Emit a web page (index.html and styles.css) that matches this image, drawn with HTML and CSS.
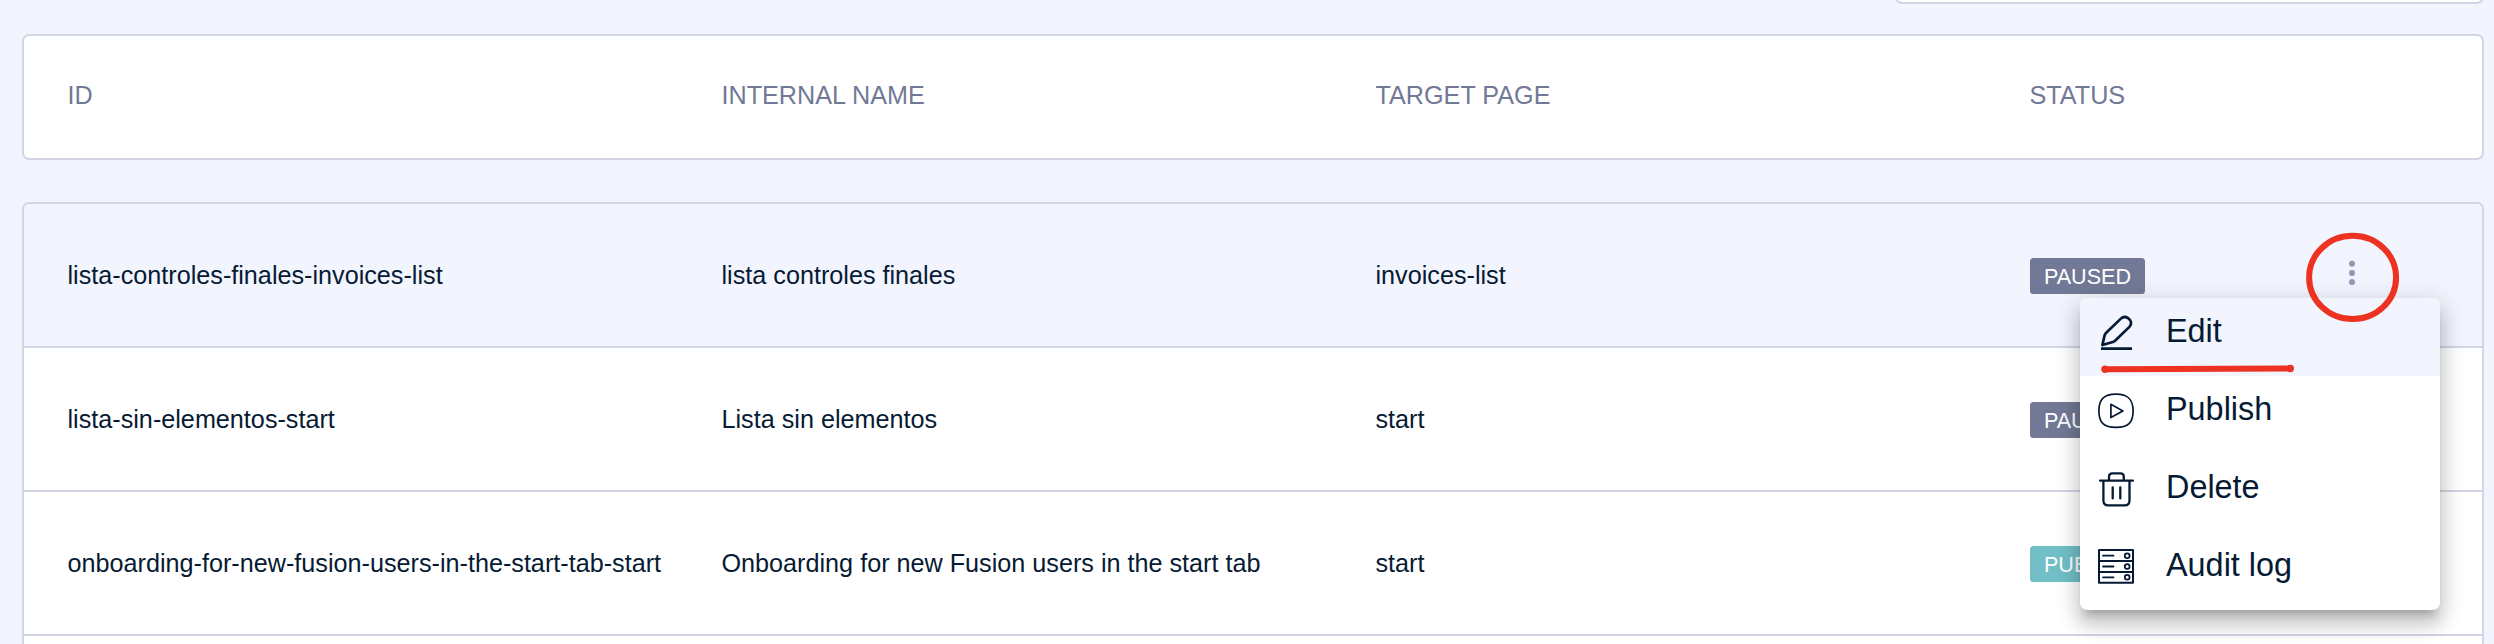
FILE: index.html
```html
<!DOCTYPE html>
<html lang="en">
<head>
<meta charset="utf-8">
<title>Guides</title>
<link rel="stylesheet" href="styles.css">
</head>
<body>
<main class="page">
  <div class="search-box"></div>
  <section class="table-head columns">
    <span>ID</span><span>INTERNAL NAME</span><span>TARGET PAGE</span><span>STATUS</span>
  </section>
  <section class="table-body">
    <div class="row columns row-active">
      <span>lista-controles-finales-invoices-list</span><span>lista controles finales</span><span>invoices-list</span>
      <div class="status"><span class="badge">PAUSED</span>
        <svg class="more" width="8" height="28" viewBox="0 0 8 28"><circle cx="4" cy="4.7" r="3"/><circle cx="4" cy="13.9" r="3"/><circle cx="4" cy="23" r="3"/></svg>
      </div>
    </div>
    <div class="row columns">
      <span>lista-sin-elementos-start</span><span>Lista sin elementos</span><span>start</span>
      <div class="status"><span class="badge">PAUSED</span></div>
    </div>
    <div class="row columns">
      <span>onboarding-for-new-fusion-users-in-the-start-tab-start</span><span>Onboarding for new Fusion users in the start tab</span><span>start</span>
      <div class="status"><span class="badge badge-published">PUBLISHED</span></div>
    </div>
    <div class="row columns"></div>
  </section>

  <nav class="menu">
    <a class="menu-item menu-item-active">
      <svg class="icon" viewBox="0 0 36 36"><path d="M4.4 31 6.6 21.4Q7 19.9 8.2 18.8L22.6 4.9Q26.2 1.5 30 4.2Q35.4 8 31.4 12.9L17.6 26.2Q16.4 27.4 14.8 28Z" stroke-width="2.7"/><path d="M3 34.6H34" stroke-width="2.8" stroke-linecap="butt"/></svg>
      <span>Edit</span>
    </a>
    <a class="menu-item">
      <svg class="icon" viewBox="0 -1 36 36"><path d="M18 1.1C30 1.1 35.1 6.2 35.1 18S30 34.4 18 34.4.9 29.8.9 18 6 1.1 18 1.1Z" stroke-width="1.7"/><path d="M12.9 11.3V24.6L24.9 18Z" stroke-width="1.7"/></svg>
      <span>Publish</span>
    </a>
    <a class="menu-item">
      <svg class="icon" viewBox="0 -1 36 36"><path d="M2 9.6H35M5.4 9.6V29.5Q5.4 34.4 10.3 34.4H26.6Q31.5 34.4 31.5 29.5V9.6M11 9.6V5.8Q11 2.4 14.4 2.4H22.4Q25.8 2.4 25.8 5.8V9.6M14.7 16.3V27.4M22.3 16.3V27.4" stroke-width="2.3"/></svg>
      <span>Delete</span>
    </a>
    <a class="menu-item">
      <svg class="icon" viewBox="0 0 36 36"><path d="M1 2H35V34.8H1ZM1 12.9H35M1 23.9H35" stroke-width="2"/><path d="M5 7.7H15.5M5 18.5H15.5M5 29.3H15.5" stroke-width="1.8"/><circle cx="29.2" cy="7.7" r="2.4" stroke-width="1.8"/><circle cx="29.2" cy="18.5" r="2.4" stroke-width="1.8"/><circle cx="29.2" cy="29.3" r="2.4" stroke-width="1.8"/></svg>
      <span>Audit log</span>
    </a>
  </nav>

  <svg class="annotation" width="300" height="150" viewBox="2100 230 300 150">
    <ellipse cx="2352.6" cy="277.4" rx="43.5" ry="41.6"/>
    <path d="M2105.5 369.3 2290 368.5"/>
    <circle class="tip" cx="2105" cy="369.3" r="3.7"/><circle class="tip" cx="2290.3" cy="368.5" r="3.7"/>
  </svg>
</main>
</body>
</html>
```
FILE: styles.css
```css
* { box-sizing: border-box; }
body {
  margin: 0;
  overflow: hidden;
  background: #f2f4fe;
  color: #071a33;
  font-family: "Liberation Sans", Arial, sans-serif;
  font-size: 25.2px;
}
.page {
  position: relative;
  height: 644px;
  padding: 0 10px 0 22px;
  overflow: hidden;
}
.search-box {
  width: 589px;
  height: 24px;
  margin: -20px 0 30px auto;
  background: #fff;
  border: 2px solid #d1d5e5;
  border-radius: 7px;
}
.columns {
  display: grid;
  grid-template-columns: repeat(3, 654px) 1fr;
  align-items: center;
  padding-left: 43.5px;
}
.table-head {
  height: 126px;
  padding-bottom: 4px;
  background: #fff;
  border: 2px solid #d1d5e5;
  border-radius: 7px;
  color: #717996;
}
.table-body {
  height: 500px;
  margin-top: 42px;
  overflow: hidden;
  background: #fff;
  border: 2px solid #d1d5e5;
  border-radius: 7px;
}
.row {
  height: 144px;
  border-bottom: 2px solid #d1d5e5;
}
.row-active { background: #f2f4fe; }
.status { display: flex; align-items: center; padding-top: 2px; }
.badge {
  height: 36px;
  padding: 0 14.4px;
  border-radius: 3.6px;
  background: #717996;
  color: #fff;
  font-size: 21.6px;
  line-height: 37px;
}
.badge-published { background: #72bfc8; }
.more { margin: -6px 0 0 203px; fill: #9299b3; }
.menu {
  position: absolute;
  left: 2080px;
  top: 298px;
  width: 360px;
  overflow: hidden;
  background: #fff;
  border-radius: 7.2px;
  box-shadow: 0 9px 9px -5.4px rgba(0,0,0,.2), 0 14.4px 18px 1.8px rgba(0,0,0,.14), 0 5.4px 25.2px 3.6px rgba(0,0,0,.12);
}
.menu-item {
  display: flex;
  align-items: center;
  gap: 32px;
  height: 78px;
  padding: 0 18px 11px;
  font-size: 32.4px;
}
.menu-item-active { background: #f2f4fe; }
.icon {
  width: 36px;
  height: 36px;
  margin-top: 1px;
  overflow: visible;
  fill: none;
  stroke: #071a33;
  stroke-linecap: round;
  stroke-linejoin: round;
}
.annotation {
  position: absolute;
  left: 2100px;
  top: 230px;
  fill: none;
  stroke: #ed3222;
  stroke-width: 6;
  stroke-linecap: round;
}
.tip { fill: #ed3222; stroke: none; }
```
